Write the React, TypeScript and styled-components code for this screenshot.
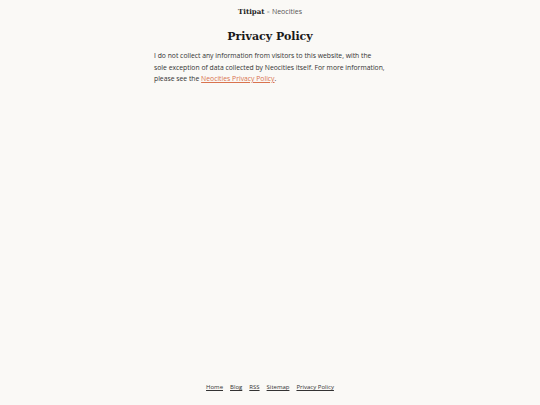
import React from 'react';
import styled, { createGlobalStyle } from 'styled-components';

const GlobalStyle = createGlobalStyle`
  html, body {
    margin: 0;
    padding: 0;
    background: #faf9f6;
  }
  body {
    font-family: "Open Sans", "Noto Sans", sans-serif;
    color: #222;
  }
`;

const Page = styled.div`
  min-height: 405px;
  display: flex;
  flex-direction: column;
  align-items: center;
  box-sizing: border-box;
  padding-top: 6px;
`;

const Header = styled.header`
  font-size: 7px;
  line-height: 12px;
  color: #555;
  display: flex;
  align-items: baseline;
  gap: 2px;
`;

const Brand = styled.span`
  font-family: "DejaVu Serif", "Liberation Serif", serif;
  font-weight: bold;
  color: #222;
  font-size: 7px;
`;

const Times = styled.span`
  color: #999;
  font-size: 6px;
`;

const Main = styled.main`
  width: 232px;
  flex: 1;
`;

const Title = styled.h1`
  font-family: "DejaVu Serif", "Liberation Serif", serif;
  font-weight: bold;
  font-size: 11px;
  line-height: 16px;
  text-align: center;
  margin: 11px 0 5px;
  color: #1a1a1a;
`;

const Text = styled.p`
  font-size: 6.8px;
  line-height: 11.5px;
  margin: 0;
  color: #333;
`;

const Link = styled.a`
  color: #d9734e;
  text-decoration: underline;
`;

const Footer = styled.footer`
  display: flex;
  gap: 7px;
  font-size: 6px;
  padding-bottom: 14px;
`;

const FooterLink = styled.a`
  color: #333;
  text-decoration: underline;
`;

export default function App() {
  return (
    <>
      <GlobalStyle />
      <Page>
        <Header>
          <Brand>Titipat</Brand>
          <Times>×</Times>
          <span>Neocities</span>
        </Header>
        <Main>
          <Title>Privacy Policy</Title>
          <Text>
            I do not collect any information from visitors to this website, with the sole
            exception of data collected by Neocities itself. For more information, please see
            the <Link href="#">Neocities Privacy Policy</Link>.
          </Text>
        </Main>
        <Footer>
          <FooterLink href="#">Home</FooterLink>
          <FooterLink href="#">Blog</FooterLink>
          <FooterLink href="#">RSS</FooterLink>
          <FooterLink href="#">Sitemap</FooterLink>
          <FooterLink href="#">Privacy Policy</FooterLink>
        </Footer>
      </Page>
    </>
  );
}
